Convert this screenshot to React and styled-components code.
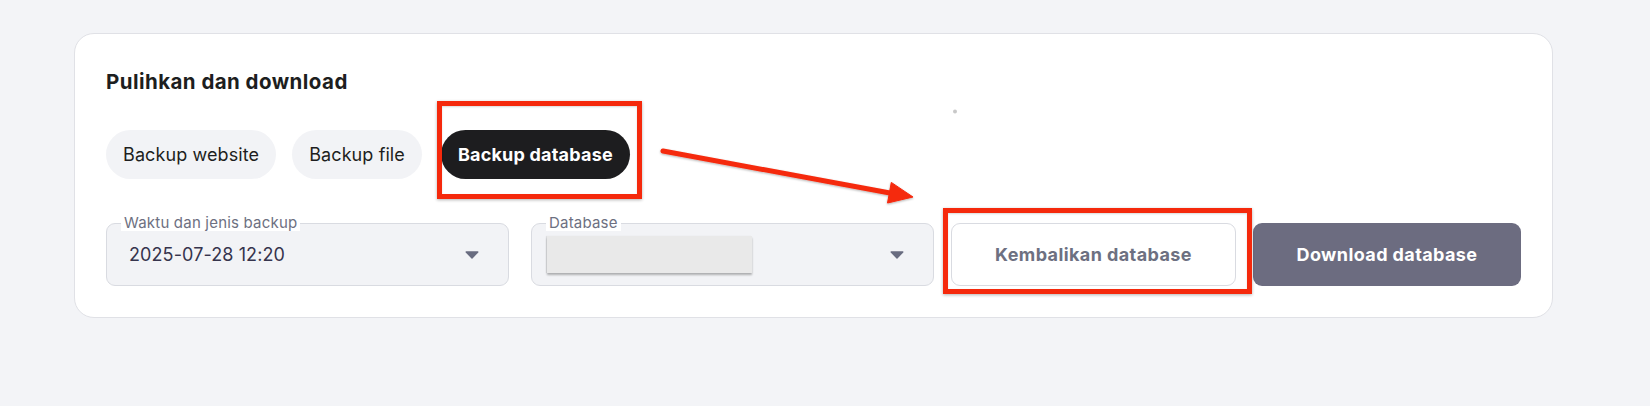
import React from "react";
import styled, { createGlobalStyle } from "styled-components";

const Global = createGlobalStyle`
  html, body {
    margin: 0;
    padding: 0;
    background: #f3f4f7;
    font-family: Inter, "Noto Sans", "Liberation Sans", sans-serif;
    color: #1d1e20;
  }
  * { box-sizing: border-box; }
`;

const Page = styled.div`
  position: relative;
  width: 1650px;
  height: 406px;
  padding: 33px 0 0 74px;
`;

const Card = styled.section`
  width: 1479px;
  background: #ffffff;
  border: 1px solid #e0e1e6;
  border-radius: 20px;
  padding: 36px 31px 31px 31px;
`;

const Title = styled.h2`
  margin: 0;
  font-size: 20.5px;
  line-height: 24px;
  font-weight: 700;
  letter-spacing: 0.45px;
  color: #1d1e20;
`;

const PillRow = styled.div`
  display: flex;
  gap: 16px;
  margin-top: 36px;
`;

const Pill = styled.button`
  height: 49px;
  padding: 0 17px;
  border: none;
  border-radius: 25px;
  font-family: inherit;
  font-size: 18px;
  font-weight: ${(p) => (p.$active ? 700 : 400)};
  letter-spacing: ${(p) => (p.$active ? "0.2px" : "0.1px")};
  background: ${(p) => (p.$active ? "#1d1d1f" : "#f2f3f6")};
  color: ${(p) => (p.$active ? "#ffffff" : "#1d1e20")};
  margin-left: ${(p) => (p.$active ? "3px" : "0")};
  cursor: pointer;
`;

const FieldRow = styled.div`
  display: flex;
  align-items: stretch;
  gap: 17px;
  margin-top: 44px;
`;

const SelectField = styled.div`
  position: relative;
  width: 403px;
  height: 63px;
  margin-right: ${(p) => p.$extraGap || 0}px;
  display: flex;
  align-items: center;
  justify-content: space-between;
  padding: 0 29px 0 ${(p) => p.$padLeft}px;
  background: #f2f3f6;
  border: 1px solid #d9dbe1;
  border-radius: 9px;
`;

const FloatLabel = styled.span`
  position: absolute;
  top: -10px;
  left: 14px;
  padding: 0 3px;
  background: #ffffff;
  font-size: 15px;
  line-height: 17px;
  letter-spacing: 0.2px;
  color: #6d7081;
`;

const Value = styled.span`
  font-size: 18px;
  letter-spacing: 0.1px;
  color: #36344d;
`;

const Redacted = styled.div`
  width: 205px;
  height: 37px;
  background: #e9e9e9;
  box-shadow: 0 2px 2px rgba(0, 0, 0, 0.28), -1px 0 1px rgba(0, 0, 0, 0.08);
`;

const CaretSvg = styled.svg`
  flex: none;
  width: 14px;
  height: 8px;
  display: block;
`;

const Caret = () => (
  <CaretSvg viewBox="0 0 14 8">
    <path d="M1.2 1h11.6L7 7z" fill="#696c80" stroke="#696c80" strokeWidth="1.4" strokeLinejoin="round" />
  </CaretSvg>
);

const OutlineButton = styled.button`
  width: 285px;
  height: 63px;
  background: #ffffff;
  border: 1px solid #d9dbe1;
  border-radius: 9px;
  font-family: inherit;
  font-size: 18px;
  font-weight: 700;
  letter-spacing: 0.4px;
  color: #6d7081;
  cursor: pointer;
`;

const SolidButton = styled.button`
  width: 268px;
  height: 63px;
  background: #6c6c80;
  border: none;
  border-radius: 9px;
  font-family: inherit;
  font-size: 18px;
  font-weight: 700;
  letter-spacing: 0.4px;
  color: #ffffff;
  cursor: pointer;
`;

const RedBox = styled.div`
  position: absolute;
  left: ${(p) => p.$x}px;
  top: ${(p) => p.$y}px;
  width: ${(p) => p.$w}px;
  height: ${(p) => p.$h}px;
  border: 5px solid #f5290c;
  box-shadow: 0 1px 3px rgba(0, 0, 0, 0.3), inset 0 1px 2px rgba(0, 0, 0, 0.15);
  pointer-events: none;
`;

const Overlay = styled.svg`
  position: absolute;
  left: 0;
  top: 0;
  width: 1650px;
  height: 406px;
  pointer-events: none;
`;

export default function App() {
  return (
    <>
      <Global />
      <Page>
        <Card>
          <Title>Pulihkan dan download</Title>
          <PillRow>
            <Pill>Backup website</Pill>
            <Pill>Backup file</Pill>
            <Pill $active>Backup database</Pill>
          </PillRow>
          <FieldRow>
            <SelectField $padLeft={22} $extraGap={5}>
              <FloatLabel>Waktu dan jenis backup</FloatLabel>
              <Value>2025-07-28 12:20</Value>
              <Caret />
            </SelectField>
            <SelectField $padLeft={15}>
              <FloatLabel>Database</FloatLabel>
              <Redacted />
              <Caret />
            </SelectField>
            <OutlineButton>Kembalikan database</OutlineButton>
            <SolidButton>Download database</SolidButton>
          </FieldRow>
        </Card>
        <RedBox $x={437} $y={101} $w={205} $h={98} />
        <RedBox $x={943} $y={208} $w={309} $h={86} />
        <Overlay viewBox="0 0 1650 406">
          <defs>
            <filter id="sh" x="-10%" y="-50%" width="120%" height="200%">
              <feDropShadow dx="0" dy="1" stdDeviation="1" floodColor="#000" floodOpacity="0.3" />
            </filter>
          </defs>
          <g filter="url(#sh)">
            <line x1="663" y1="151" x2="890" y2="193" stroke="#f5290c" strokeWidth="5" strokeLinecap="round" />
            <polygon points="913,197 891.3,182.4 887.5,203" fill="#f5290c" stroke="#f5290c" strokeWidth="1" strokeLinejoin="round" />
          </g>
          <circle cx="955" cy="111.5" r="2" fill="#c8c8c8" />
        </Overlay>
      </Page>
    </>
  );
}
